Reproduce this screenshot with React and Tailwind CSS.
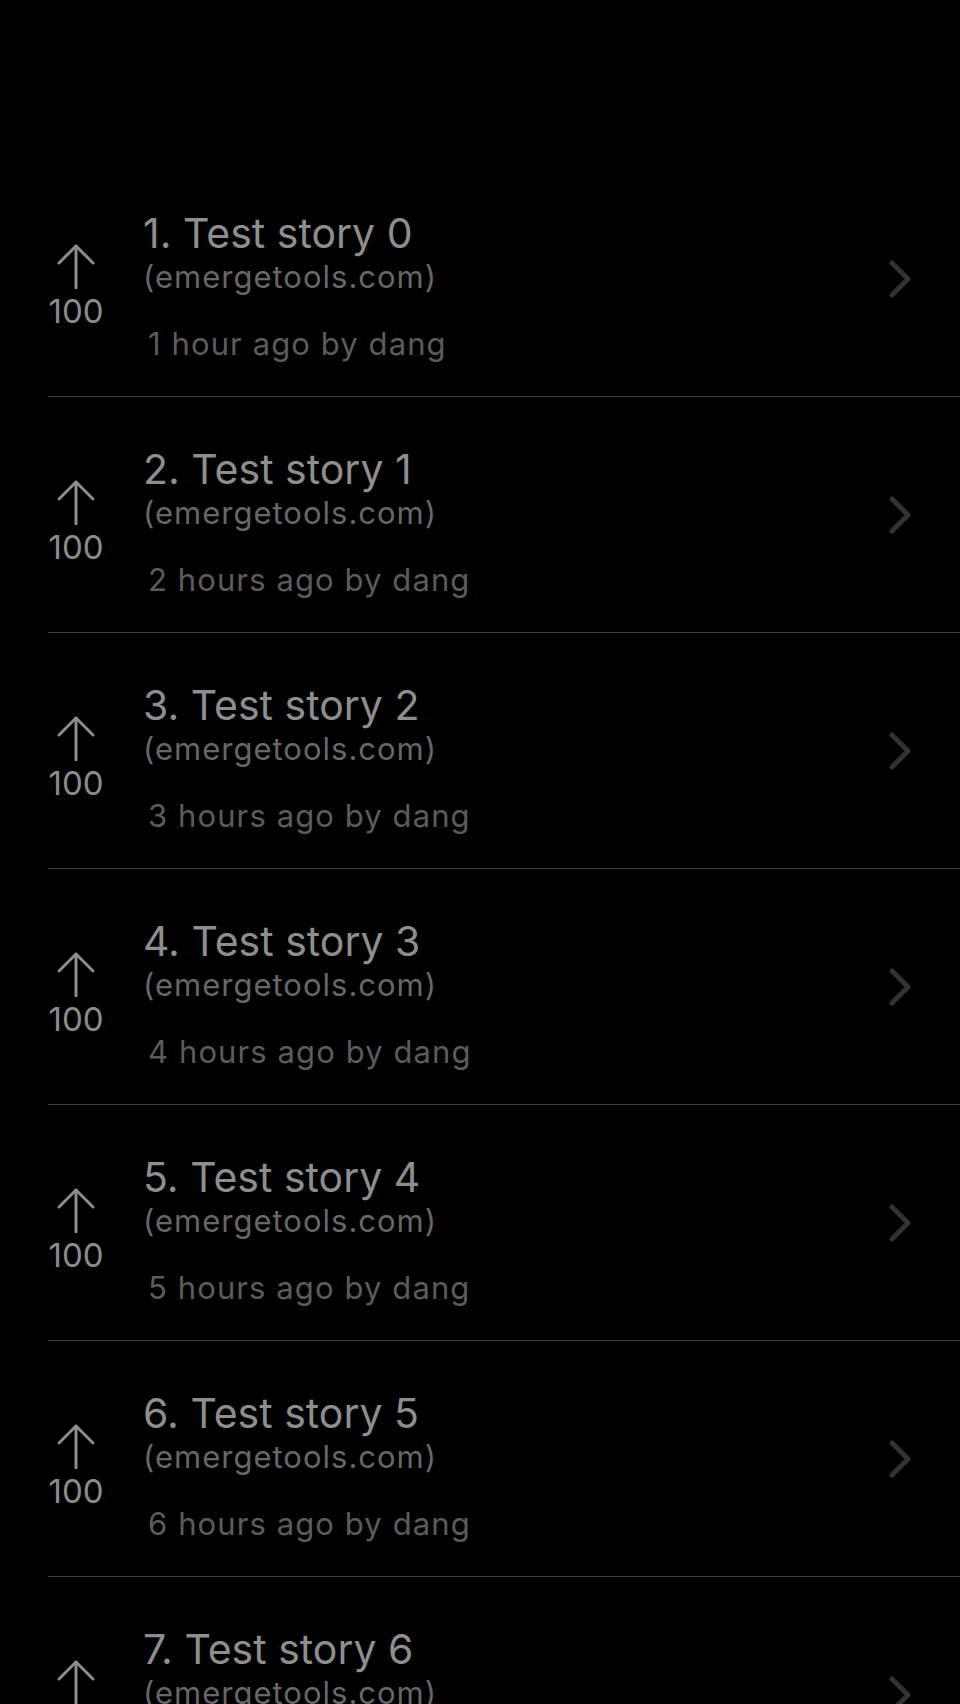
import React from "react";

const stories = Array.from({ length: 7 }, (_, i) => ({
  id: i,
  title: `${i + 1}. Test story ${i}`,
  site: "(emergetools.com)",
  time: i === 0 ? "1 hour ago by dang" : `${i + 1} hours ago by dang`,
  score: 100,
}));

const UpArrow = () => (
  <svg width="40" height="46" viewBox="0 0 40 46" fill="none" stroke="#8c8c8c" strokeWidth="3" strokeLinecap="round" strokeLinejoin="round">
    <path d="M20 3 L20 45" />
    <path d="M3 20 L20 3 L37 20" />
  </svg>
);

const Chevron = () => (
  <svg width="22" height="38" viewBox="0 0 22 38" fill="none" stroke="#333333" strokeWidth="5" strokeLinecap="round" strokeLinejoin="round">
    <path d="M3 3 L19 19 L3 35" />
  </svg>
);

const StoryRow = ({ story }) => {
  return (
    <div className="ml-12 h-[236px] border-b border-[#444444] flex items-center">
      <div className="w-[56px] flex flex-col items-center pt-[14px]">
        <UpArrow />
        <span className="mt-[4px] text-[33px] leading-[36px] text-[#8c8c8c]">{story.score}</span>
      </div>
      <div className="ml-[39px] flex-1 self-start pt-[46px]">
        <div className="text-[41px] leading-[52px] text-[#8e8e8e]">{story.title}</div>
        <div className="text-[31px] leading-[36px] tracking-[1px] text-[#676767]">{story.site}</div>
        <div className="mt-[31px] pl-[5px] text-[31px] leading-[36px] tracking-[1.1px] text-[#5c5c5c]">{story.time}</div>
      </div>
      <div className="pr-[49px]">
        <Chevron />
      </div>
    </div>
  );
};

export default function App() {
  return (
    <div className="min-h-screen h-[1704px] overflow-hidden bg-black pt-[161px] font-['Inter',sans-serif]">
      {stories.map((s) => (
        <StoryRow key={s.id} story={s} />
      ))}
    </div>
  );
}
